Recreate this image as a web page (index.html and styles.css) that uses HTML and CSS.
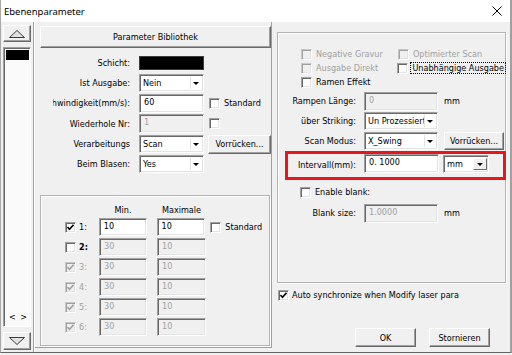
FILE: index.html
```html
<!DOCTYPE html>
<html lang="de">
<head>
    <meta charset="UTF-8">
    <title>Ebenenparameter</title>
    <link rel="stylesheet" href="styles.css">
</head>
<body>
<div class="window">
    <div class="titlebar">
        <span class="title">Ebenenparameter</span>
        <svg class="close" width="10" height="10" viewBox="0 0 10 10"><path d="M0.5 0.5L9.5 9.5M9.5 0.5L0.5 9.5" stroke="#000" stroke-width="1"/></svg>
    </div>

    <div class="client">
        <!-- Ebenenliste -->
        <div class="strip">
            <div class="btn arrow-btn">
                <svg width="16" height="8" viewBox="0 0 16 8"><polygon points="8,0.5 15.5,7.5 0.5,7.5" fill="#e2e2e2" stroke="#3c3c3c"/></svg>
            </div>
            <div class="layer-list">
                <div class="layer-item"></div>
                <div class="list-nav">&lt; &gt;</div>
            </div>
            <div class="btn arrow-btn down">
                <svg width="16" height="8" viewBox="0 0 16 8"><polygon points="0.5,0.5 15.5,0.5 8,7.5" fill="#e2e2e2" stroke="#3c3c3c"/></svg>
            </div>
        </div>
        <div class="sep"></div>

        <!-- linke Seite -->
        <div class="left-panel">
            <div class="btn lib-btn">Parameter Bibliothek</div>

            <div class="row h21">
                <div class="lbl">Schicht:</div>
                <div class="color-box"></div>
            </div>
            <div class="row">
                <div class="lbl">Ist Ausgabe:</div>
                <div class="combo"><span class="combo-text">Nein</span><span class="drop"><i></i></span></div>
            </div>
            <div class="row">
                <div class="lbl">Geschwindigkeit(mm/s):</div>
                <div class="field">60</div>
                <span class="cb"></span>
                <span class="std-text">Standard</span>
            </div>
            <div class="row h21">
                <div class="lbl">Wiederhole Nr:</div>
                <div class="field disabled">1</div>
                <span class="cb"></span>
            </div>
            <div class="row">
                <div class="lbl">Verarbeitungs</div>
                <div class="combo"><span class="combo-text">Scan</span><span class="drop"><i></i></span></div>
                <div class="btn adv-btn">Vorrücken...</div>
            </div>
            <div class="row">
                <div class="lbl">Beim Blasen:</div>
                <div class="combo"><span class="combo-text">Yes</span><span class="drop"><i></i></span></div>
            </div>

            <div class="groupbox speed-group">
                <div class="speed-head">
                    <span class="head-min">Min.</span>
                    <span class="head-max">Maximale</span>
                </div>
                <div class="speed-row">
                    <span class="cb checked"><svg width="7" height="7" viewBox="0 0 7 7"><path d="M0.5 3L2.5 5.2L6.5 0.8" fill="none" stroke="#000" stroke-width="1.6"/></svg></span>
                    <span class="num">1:</span>
                    <div class="field small">10</div>
                    <div class="field small wide">10</div>
                    <span class="cb"></span>
                    <span class="std-text short">Standard</span>
                </div>
                <div class="speed-row">
                    <span class="cb"></span>
                    <span class="num bold">2:</span>
                    <div class="field small disabled">30</div>
                    <div class="field small wide disabled">10</div>
                </div>
                <div class="speed-row h21">
                    <span class="cb disabled"><svg width="7" height="7" viewBox="0 0 7 7"><path d="M0.5 3L2.5 5.2L6.5 0.8" fill="none" stroke="#a0a0a0" stroke-width="1.6"/></svg></span>
                    <span class="num gray">3:</span>
                    <div class="field small disabled">30</div>
                    <div class="field small wide disabled">10</div>
                </div>
                <div class="speed-row">
                    <span class="cb disabled"><svg width="7" height="7" viewBox="0 0 7 7"><path d="M0.5 3L2.5 5.2L6.5 0.8" fill="none" stroke="#a0a0a0" stroke-width="1.6"/></svg></span>
                    <span class="num gray">4:</span>
                    <div class="field small disabled">30</div>
                    <div class="field small wide disabled">10</div>
                </div>
                <div class="speed-row h21">
                    <span class="cb disabled"><svg width="7" height="7" viewBox="0 0 7 7"><path d="M0.5 3L2.5 5.2L6.5 0.8" fill="none" stroke="#a0a0a0" stroke-width="1.6"/></svg></span>
                    <span class="num gray">5:</span>
                    <div class="field small disabled">30</div>
                    <div class="field small wide disabled">10</div>
                </div>
                <div class="speed-row">
                    <span class="cb disabled"><svg width="7" height="7" viewBox="0 0 7 7"><path d="M0.5 3L2.5 5.2L6.5 0.8" fill="none" stroke="#a0a0a0" stroke-width="1.6"/></svg></span>
                    <span class="num gray">6:</span>
                    <div class="field small disabled">30</div>
                    <div class="field small wide disabled">10</div>
                </div>
            </div>
        </div>

        <!-- rechte Seite -->
        <div class="right-area">
            <div class="groupbox mode-group">
                <div class="cb-row">
                    <span class="cb-item col1 gray"><span class="cb disabled"></span>Negative Gravur</span>
                    <span class="cb-item gray"><span class="cb disabled"></span>Optimierter Scan</span>
                </div>
                <div class="cb-row">
                    <span class="cb-item col1 gray"><span class="cb disabled"></span>Ausgabe Direkt</span>
                    <span class="cb-item"><span class="cb"></span><span class="focus">Unabhängige Ausgabe</span></span>
                </div>
                <div class="cb-row">
                    <span class="cb-item"><span class="cb"></span>Ramen Effekt</span>
                </div>

                <div class="frow first">
                    <div class="rlbl">Rampen Länge:</div>
                    <div class="field rfield disabled">0</div>
                    <span class="unit">mm</span>
                </div>
                <div class="frow h21">
                    <div class="rlbl">über Striking:</div>
                    <div class="combo rfield"><span class="combo-text">Un Prozessiert</span><span class="drop"><i></i></span></div>
                </div>
                <div class="frow h19">
                    <div class="rlbl">Scan Modus:</div>
                    <div class="combo rfield"><span class="combo-text">X_Swing</span><span class="drop"><i></i></span></div>
                    <div class="btn adv-btn right">Vorrücken...</div>
                </div>

                <div class="highlight">
                    <div class="rlbl tall">Intervall(mm):</div>
                    <div class="field ifield">0. 1000</div>
                    <div class="combo unit-combo"><span class="combo-text">mm</span><span class="drop raised"><i></i></span></div>
                </div>

                <div class="cb-row blank-row">
                    <span class="cb-item"><span class="cb"></span>Enable blank:</span>
                </div>
                <div class="frow blank-size">
                    <div class="rlbl">Blank size:</div>
                    <div class="field rfield disabled">1.0000</div>
                    <span class="unit">mm</span>
                </div>
            </div>

            <div class="sync-row">
                <span class="cb checked"><svg width="7" height="7" viewBox="0 0 7 7"><path d="M0.5 3L2.5 5.2L6.5 0.8" fill="none" stroke="#000" stroke-width="1.6"/></svg></span>
                <span>Auto synchronize when Modify laser para</span>
            </div>

            <div class="dialog-buttons">
                <div class="btn dlg-btn">OK</div>
                <div class="btn dlg-btn">Stornieren</div>
            </div>
        </div>
    </div>
</div>
</body>
</html>
```

FILE: styles.css
```css
* {
    box-sizing: border-box;
}
body {
    margin: 0;
    background: #f0f0f0;
    font-family: "DejaVu Sans Condensed", "DejaVu Sans", sans-serif;
    font-stretch: condensed;
    font-size: 9px;
    color: #000;
}
.window {
    width: 512px;
    height: 353px;
    background: #f0f0f0;
    border-left: 1px solid #a8a8a8;
    border-right: 2px solid #a0a0a0;
    border-bottom: 1px solid #646464;
    overflow: hidden;
}
.titlebar {
    height: 22px;
    background: #fff;
    display: flex;
    align-items: center;
    justify-content: space-between;
    padding: 0 8px 0 3px;
}
.title {
    font-family: "Noto Sans", sans-serif;
    font-stretch: normal;
    font-size: 9.5px;
}
.client {
    display: flex;
    height: 330px;
}

/* allgemeine Steuerelemente */
.btn {
    background: #f0f0f0;
    border: 1px solid;
    border-color: #fff #696969 #696969 #fff;
    box-shadow: inset -1px -1px #a0a0a0;
    display: flex;
    align-items: center;
    justify-content: center;
    white-space: nowrap;
}
.field {
    height: 19px;
    background: #fff;
    border: 1px solid;
    border-color: #a0a0a0 #fff #fff #a0a0a0;
    box-shadow: inset 1px 1px #696969, inset -1px -1px #e3e3e3;
    padding: 0 4px;
    line-height: 15px;
    white-space: nowrap;
    overflow: hidden;
}
.field.disabled {
    background: #f0f0f0;
    color: #a0a0a0;
}
.combo {
    height: 18px;
    background: #fff;
    border: 1px solid;
    border-color: #a0a0a0 #fff #fff #a0a0a0;
    box-shadow: inset 1px 1px #696969, inset -1px -1px #e3e3e3;
    display: flex;
    align-items: stretch;
    padding: 2px 2px 2px 2px;
}
.combo-text {
    flex: 1;
    overflow: hidden;
    white-space: nowrap;
    line-height: 12px;
    padding-left: 1px;
}
.drop {
    width: 11px;
    border-left: 1px solid #e3e3e3;
    display: flex;
    align-items: center;
    justify-content: center;
}
.drop i {
    display: block;
    border-left: 3px solid transparent;
    border-right: 3px solid transparent;
    border-top: 3px solid #000;
}
.drop.raised {
    background: #f0f0f0;
    border: 1px solid;
    border-color: #fff #696969 #696969 #fff;
    width: 14px;
}
.cb {
    flex: none;
    width: 11px;
    height: 11px;
    background: #fff;
    border: 1px solid;
    border-color: #a0a0a0 #fff #fff #a0a0a0;
    box-shadow: inset 1px 1px #696969, inset -1px -1px #e3e3e3;
    display: flex;
    align-items: center;
    justify-content: center;
}
.cb.disabled {
    background: #f0f0f0;
    border-color: #c8c8c8 #fff #fff #c8c8c8;
    box-shadow: inset 1px 1px #a0a0a0, inset -1px -1px #e3e3e3;
}
.gray {
    color: #a0a0a0;
}
.groupbox {
    border: 1px solid #b4b4b4;
    box-shadow: inset 1px 1px #fff, 1px 1px #fff;
}

/* Ebenenliste links */
.strip {
    width: 32px;
    padding: 3px 0 0 2px;
    display: flex;
    flex-direction: column;
}
.arrow-btn {
    width: 28px;
    height: 17px;
}
.arrow-btn.down {
    margin-top: 5px;
    height: 18px;
}
.layer-list {
    margin-top: 5px;
    width: 28px;
    height: 280px;
    background: #fafafa;
    border: 1px solid;
    border-color: #a0a0a0 #fff #fff #a0a0a0;
    box-shadow: inset 1px 1px #696969;
    display: flex;
    flex-direction: column;
    padding: 2px 1px 0 2px;
}
.layer-item {
    height: 10px;
    background: #000;
}
.list-nav {
    margin-top: auto;
    padding: 0 0 4px 3px;
    font-size: 9px;
    letter-spacing: 1px;
}
.sep {
    width: 2px;
    border-left: 1px solid #a0a0a0;
    border-right: 1px solid #fff;
}

/* linke Seite */
.left-panel {
    width: 237px;
    height: 326px;
    border-right: 1px solid #a0a0a0;
    border-bottom: 1px solid #a0a0a0;
    padding-left: 5px;
}
.lib-btn {
    margin-top: 4px;
    width: 231px;
    height: 22px;
    margin-bottom: 4px;
}
.row {
    display: flex;
    align-items: center;
    height: 20px;
}
.h21 {
    height: 21px;
}
.h19 {
    height: 19px;
}
.lbl {
    flex: none;
    width: 77px;
    margin-left: 13px;
    margin-right: 9px;
    display: flex;
    justify-content: flex-end;
    overflow: hidden;
    white-space: nowrap;
}
.color-box {
    width: 65px;
    height: 14px;
    background: #000;
    border: 1px solid #3c3c3c;
}
.row .combo,
.row .field {
    width: 65px;
}
.row .cb {
    margin-left: 5px;
}
.std-text {
    margin-left: 4px;
    width: 46px;
    overflow: hidden;
    white-space: nowrap;
}
.adv-btn {
    margin-left: 4px;
    width: 63px;
    height: 19px;
}
.speed-group {
    margin-top: 21px;
    width: 230px;
    height: 151px;
    overflow: hidden;
}
.speed-head {
    margin-top: 7px;
    height: 14px;
    display: flex;
    align-items: center;
    padding-left: 58px;
}
.head-min {
    width: 48px;
    text-align: center;
}
.head-max {
    width: 49px;
    margin-left: 10px;
    text-align: center;
}
.speed-row {
    display: flex;
    align-items: center;
    height: 20px;
    padding-left: 24px;
}
.speed-row .cb:first-child {
    margin-right: 3px;
}
.num {
    width: 20px;
}
.num.bold {
    font-weight: bold;
}
.field.small {
    width: 48px;
    height: 18px;
}
.field.wide {
    width: 49px;
    margin-left: 10px;
}
.speed-row .field + .cb {
    margin-left: 5px;
}
.std-text.short {
    width: 44px;
}

/* rechte Seite */
.right-area {
    flex: 1;
    padding: 0 0 0 5px;
}
.mode-group {
    margin-top: 10px;
    width: 229px;
    height: 251px;
    padding-top: 14px;
}
.cb-row {
    height: 14px;
    display: flex;
    align-items: center;
    padding-left: 23px;
}
.cb-item {
    display: flex;
    align-items: center;
    gap: 4px;
    white-space: nowrap;
}
.col1 {
    width: 97px;
}
.focus {
    outline: 1px dotted #000;
    padding: 0 1px;
    margin-left: -1px;
}
.frow {
    display: flex;
    align-items: center;
    height: 20px;
}
.frow.first {
    margin-top: 2px;
}
.rlbl {
    flex: none;
    width: 68px;
    margin-left: 10px;
    margin-right: 8px;
    text-align: right;
    white-space: nowrap;
}
.rfield {
    width: 74px;
}
.frow .combo {
    height: 18px;
}
.unit {
    margin-left: 6px;
}
.adv-btn.right {
    margin-left: 6px;
    width: 60px;
    height: 18px;
}
.highlight {
    position: relative;
    margin-left: 7px;
    width: 221px;
    height: 29px;
    border: 3px solid #e8161c;
    display: flex;
    align-items: flex-start;
}
.rlbl.tall {
    margin-left: 0;
    height: 23px;
    line-height: 23px;
}
.ifield {
    width: 75px;
    height: 19px;
}
.unit-combo {
    margin-left: 4px;
    margin-top: 1px;
    width: 46px;
    height: 18px;
    padding-right: 1px;
}
.blank-row {
    margin-top: 5px;
    padding-left: 22px;
}
.blank-size {
    margin-top: 4px;
}
.sync-row {
    margin-top: 6px;
    height: 12px;
    display: flex;
    align-items: center;
    gap: 3px;
    padding-left: 1px;
}
.dialog-buttons {
    margin-top: 27px;
    display: flex;
    justify-content: flex-end;
    gap: 13px;
    padding-right: 20px;
}
.dlg-btn {
    width: 61px;
    height: 19px;
}
```
